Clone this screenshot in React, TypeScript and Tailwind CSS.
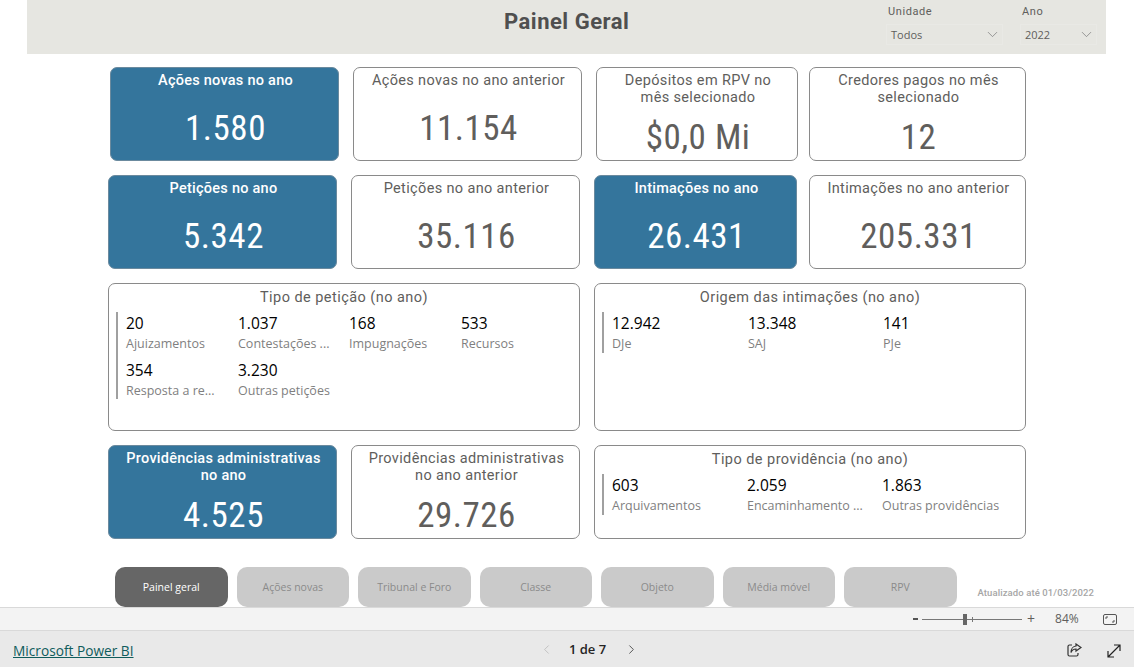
import type { FC, ReactNode } from 'react';
import { ChevronDown, ChevronLeft, ChevronRight } from 'lucide-react';

const din = "font-['Roboto',sans-serif]";
const segoe = "font-['Open_Sans',sans-serif]";

interface KpiProps {
  title: ReactNode;
  value: string;
  width: string;
  blue?: boolean;
  twoLine?: boolean;
}

const Kpi: FC<KpiProps> = ({ title, value, width, blue, twoLine }) => (
  <div
    className={`${width} relative h-[94px] shrink-0 rounded-[7px] border text-center ${din} ${
      blue
        ? 'border-[#6b8a9e] bg-[#34759c] font-medium text-white'
        : 'border-[#8a8a8a] bg-white text-[#605e5c]'
    }`}
  >
    <div
      className={`flex h-[60px] items-start justify-center pl-[6px] pr-1 pt-[4px] text-[14.5px] leading-[17px] ${
        blue ? 'tracking-[0.25px]' : 'tracking-[0.35px]'
      }`}
    >
      <span>{title}</span>
    </div>
    <div
      className={`absolute inset-x-0 pl-[2px] text-[35px] font-normal leading-[40px] tracking-[0.5px] [font-stretch:80%] ${
        twoLine ? 'bottom-[2px]' : 'bottom-[11px]'
      }`}
    >
      {value}
    </div>
  </div>
);

interface StatProps {
  value: string;
  label: string;
  width: string;
}

const Stat: FC<StatProps> = ({ value, label, width }) => (
  <div className={`${width} h-[47px] shrink-0 ${segoe}`}>
    <div className="text-[15.5px] leading-[22px] text-black">{value}</div>
    <div className="mt-[1px] text-[12.5px] leading-[18px] text-[#7f7f7f]">{label}</div>
  </div>
);

interface PanelProps {
  title: string;
  width: string;
  height: string;
  barHeight: string;
  children: ReactNode;
}

const Panel: FC<PanelProps> = ({ title, width, height, barHeight, children }) => (
  <div className={`${width} ${height} shrink-0 rounded-[7px] border border-[#8a8a8a] bg-white`}>
    <div className={`pt-[4px] text-center text-[14.5px] leading-[19px] tracking-[0.45px] text-[#605e5c] ${din}`}>
      {title}
    </div>
    <div className="ml-[7px] mt-[5px] flex">
      <div className={`${barHeight} w-[2px] shrink-0 bg-[#a0a0a0]`} />
      <div className="ml-[8px] flex flex-wrap">{children}</div>
    </div>
  </div>
);

const Slicer: FC<{ label: string; value: string; width: string }> = ({ label, value, width }) => (
  <div className={`${width} pt-[4px]`}>
    <div className={`pl-[2px] text-[11px] leading-[16px] tracking-[0.6px] text-[#605e5c] ${din}`}>{label}</div>
    <div
      className={`mt-[4px] flex h-[21px] items-center justify-between border border-[#e9e9e5] pl-[4px] pr-[1px] pt-[2px] text-[11px] text-[#605e5c] ${segoe}`}
    >
      {value}
      <ChevronDown size={17} strokeWidth={1} className="-mt-[2px] text-[#777777]" />
    </div>
  </div>
);

const pages = ['Painel geral', 'Ações novas', 'Tribunal e Foro', 'Classe', 'Objeto', 'Média móvel', 'RPV'];

export default function App() {
  return (
    <div className="flex h-[667px] w-[1134px] flex-col overflow-hidden bg-white">
      <header className="ml-[27px] flex h-[54px] w-[1079px] shrink-0 bg-[#e6e6e1] pr-[9px]">
        <h1 className={`ml-[477px] mt-[7px] text-[22px] font-bold leading-[29px] tracking-[0.5px] text-[#4f4f4f] ${din}`}>
          Painel Geral
        </h1>
        <div className="ml-auto flex gap-[17px]">
          <Slicer label="Unidade" value="Todos" width="w-[117px]" />
          <Slicer label="Ano" value="2022" width="w-[77px]" />
        </div>
      </header>

      <div className="ml-[110px] mt-[13px] flex gap-[14px]">
        <Kpi title="Ações novas no ano" value="1.580" width="w-[229px]" blue />
        <Kpi title="Ações novas no ano anterior" value="11.154" width="w-[229px]" />
        <Kpi
          title={
            <>
              Depósitos em RPV no
              <br />
              mês selecionado
            </>
          }
          value="$0,0 Mi"
          width="w-[202px]"
          twoLine
        />
        <div className="-ml-[3px]">
          <Kpi
            title={
              <>
                Credores pagos no mês
                <br />
                selecionado
              </>
            }
            value="12"
            width="w-[217px]"
            twoLine
          />
        </div>
      </div>

      <div className="ml-[108px] mt-[14px] flex gap-[14px]">
        <Kpi title="Petições no ano" value="5.342" width="w-[229px]" blue />
        <Kpi title="Petições no ano anterior" value="35.116" width="w-[229px]" />
        <Kpi title="Intimações no ano" value="26.431" width="w-[203px]" blue />
        <div className="-ml-[2px]">
          <Kpi title="Intimações no ano anterior" value="205.331" width="w-[217px]" />
        </div>
      </div>

      <div className="ml-[108px] mt-[14px] flex gap-[14px]">
        <Panel title="Tipo de petição (no ano)" width="w-[472px]" height="h-[148px]" barHeight="h-[87px]">
          <Stat value="20" label="Ajuizamentos" width="w-[112px]" />
          <Stat value="1.037" label="Contestações ..." width="w-[111px]" />
          <Stat value="168" label="Impugnações" width="w-[112px]" />
          <Stat value="533" label="Recursos" width="w-[100px]" />
          <Stat value="354" label="Resposta a re..." width="w-[112px]" />
          <Stat value="3.230" label="Outras petições" width="w-[111px]" />
        </Panel>
        <Panel title="Origem das intimações (no ano)" width="w-[432px]" height="h-[148px]" barHeight="h-[41px]">
          <Stat value="12.942" label="DJe" width="w-[136px]" />
          <Stat value="13.348" label="SAJ" width="w-[135px]" />
          <Stat value="141" label="PJe" width="w-[100px]" />
        </Panel>
      </div>

      <div className="ml-[108px] mt-[14px] flex gap-[14px]">
        <Kpi
          title={
            <>
              Providências administrativas
              <br />
              no ano
            </>
          }
          value="4.525"
          width="w-[229px]"
          blue
          twoLine
        />
        <Kpi
          title={
            <>
              Providências administrativas
              <br />
              no ano anterior
            </>
          }
          value="29.726"
          width="w-[229px]"
          twoLine
        />
        <Panel title="Tipo de providência (no ano)" width="w-[432px]" height="h-[94px]" barHeight="h-[41px]">
          <Stat value="603" label="Arquivamentos" width="w-[135px]" />
          <Stat value="2.059" label="Encaminhamento ..." width="w-[135px]" />
          <Stat value="1.863" label="Outras providências" width="w-[135px]" />
        </Panel>
      </div>

      <nav className="ml-[115px] mt-[28px] flex h-[40px] shrink-0 gap-[9px]">
        {pages.map((page, i) => (
          <div
            key={page}
            className={`flex h-[40px] w-[112.5px] items-center justify-center rounded-[10px] pt-[2px] text-[10.5px] ${segoe} ${
              i === 0 ? 'bg-[#666666] text-white' : 'bg-[#cacaca] text-[#8a8a8a]'
            }`}
          >
            {page}
          </div>
        ))}
        <div
          className={`ml-[12px] mt-[20px] whitespace-nowrap text-[9.5px] font-medium leading-[12px] tracking-[0.1px] text-[#a6a6a6] ${din}`}
        >
          Atualizado até 01/03/2022
        </div>
      </nav>

      <div className={`flex h-[24px] shrink-0 items-center border-y border-[#d9d9d9] bg-[#f3f3f3] pl-[913px] text-[#605e5c] ${segoe}`}>
        <span className="h-[2px] w-[5px] bg-[#555555]" />
        <span className="relative ml-[4px] h-[1px] w-[100px] bg-[#777777]">
          <span className="absolute left-[41px] top-[-5px] h-[11px] w-[4px] bg-[#666666]" />
          <span className="absolute left-[50px] top-[-2px] h-[5px] w-[1px] bg-[#777777]" />
        </span>
        <span className="ml-[5px] text-[14px] leading-none">+</span>
        <span className="ml-[20px] text-[12px] leading-none">84%</span>
        <svg width="14" height="11" viewBox="0 0 14 11" fill="none" stroke="#555555" strokeWidth="1" className="ml-[24px]">
          <rect x="0.5" y="0.5" width="13" height="10" rx="1.5" />
          <path d="M3 5V3h2M11 6v2H9" />
        </svg>
      </div>

      <footer className={`relative flex flex-1 items-center justify-center bg-[#e9e9e9] pl-[44px] pt-[2px] ${segoe}`}>
        <a className="absolute left-[13px] top-[11px] text-[13.7px] leading-[18px] text-[#0f5c5c] underline">
          Microsoft Power BI
        </a>
        <ChevronLeft size={15} strokeWidth={1.2} className="-mt-[2px] mr-[15px] text-[#b5b5b5]" />
        <span className="text-[13px] font-semibold text-[#252423]">1 de 7</span>
        <ChevronRight size={15} strokeWidth={1.4} className="-mt-[2px] ml-[18px] text-[#444444]" />
        <svg
          width="15"
          height="14"
          viewBox="0 0 15 14"
          fill="none"
          stroke="#333333"
          strokeWidth="1.2"
          className="absolute left-[1067px] top-[12px]"
        >
          <path d="M5 2H2.5A1.5 1.5 0 0 0 1 3.5v8A1.5 1.5 0 0 0 2.5 13h7a1.5 1.5 0 0 0 1.5-1.5V10" />
          <path d="M9 1l5 3.5L9 8V6C7 6 5 7 4 9.5 4 6 6 3.2 9 3z" />
        </svg>
        <svg
          width="14"
          height="14"
          viewBox="0 0 14 14"
          fill="none"
          stroke="#222222"
          strokeWidth="1.2"
          className="absolute left-[1107px] top-[13px]"
        >
          <path d="M1 13L13 1M7 1h6v6M1 7v6h6" />
        </svg>
      </footer>
    </div>
  );
}
